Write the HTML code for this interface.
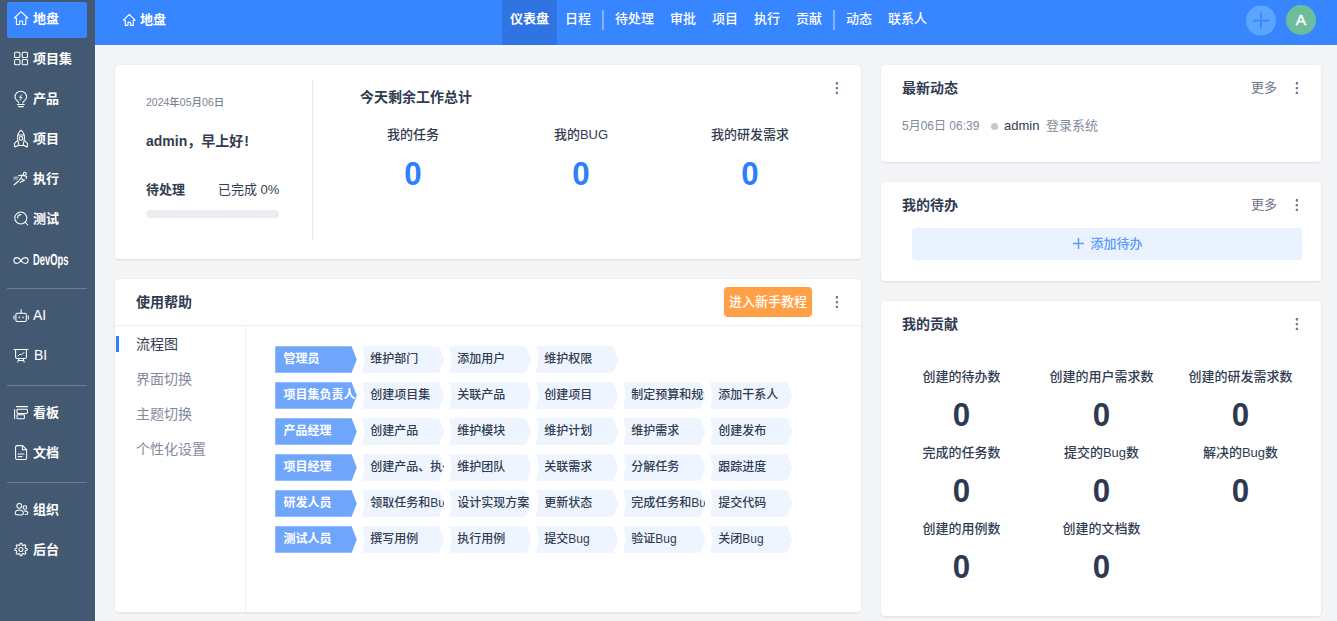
<!DOCTYPE html>
<html lang="zh-CN">
<head>
<meta charset="utf-8">
<title>地盘 - 禅道</title>
<style>
*{box-sizing:border-box;margin:0;padding:0}
html,body{width:1337px;height:621px;overflow:hidden;background:#f3f5f7;
  font-family:"Liberation Sans","Noto Sans CJK SC",sans-serif;font-size:13px;color:#313c52}
body{position:relative}
/* ---------- sidebar ---------- */
#menu{position:absolute;left:0;top:0;width:95px;height:621px;background:#435972}
#menu .act{position:absolute;left:7px;top:2px;width:80px;height:36px;border-radius:2px;background:#3785ff}
#ico{position:absolute;left:0;top:0;stroke:#fff;fill:none;stroke-width:1.05;stroke-linecap:round;stroke-linejoin:round}
#menu .it{position:absolute;left:33px;height:36px;color:#fff;font-size:13px;font-weight:bold;line-height:36px;white-space:nowrap}
#menu .it.lat{font-weight:normal;font-size:14px}
#menu .it.dev{font-size:16px}
#menu .it.dev span{display:inline-block;transform:scale(.585,1) rotate(.03deg);transform-origin:0 64%}
#menu .dv{position:absolute;left:7px;width:80px;height:1px;background:#6a7d94}
/* ---------- header ---------- */
#header{position:absolute;left:95px;top:0;width:1242px;height:45px;background:#3785ff;color:#fff}
#heading{position:absolute;left:27px;top:1px;height:38px;line-height:38px;font-size:13px;font-weight:bold;white-space:nowrap}
#heading svg{position:absolute;left:0;top:12px;width:15px;height:14px;stroke:#fff;fill:none;stroke-width:1.15;stroke-linejoin:round;stroke-linecap:round}
#heading span{margin-left:18px}
#nav{position:absolute;left:0;top:0;height:45px;white-space:nowrap}
#nav a{position:absolute;top:0;height:45px;line-height:38px;color:#fff;text-decoration:none;font-size:13px;font-weight:500}
#nav a.active{background:#2f74e0;font-weight:bold;padding:0 8px;width:55px}
#nav i{position:absolute;top:10px;width:2px;height:20px;background:rgba(255,255,255,.38);margin-left:-1px}
#plus{position:absolute;left:1151px;top:5px;transform:translateY(.6px);width:30px;height:30px;border-radius:50%;background:#5aa6ff}
#plus:before{content:"";position:absolute;left:7px;top:14px;width:16px;height:2px;background:#3c8aff}
#plus:after{content:"";position:absolute;left:14px;top:7px;width:2px;height:16px;background:#3c8aff}
#avatar{position:absolute;left:1191px;top:5px;width:30px;height:30px;border-radius:50%;background:#6dbd9c;color:#fff;
  font-size:15.5px;line-height:30px;text-align:center;-webkit-text-stroke:.4px #fff}
/* ---------- cards ---------- */
.card{position:absolute;background:#fff;border-radius:4px;box-shadow:0 0 5px rgba(30,40,60,.04),0 1px 2px rgba(30,40,60,.08)}
.card h3{position:absolute;left:21px;top:13px;font-size:14px;font-weight:bold;color:#313c52;line-height:20px;white-space:nowrap}
.dots{position:absolute;width:4px;height:14px;margin-left:-1px;background:
  radial-gradient(circle at 1.9px 1.3px,#6e7c99 1.05px,rgba(110,124,153,0) 1.65px),
  radial-gradient(circle at 1.9px 6.1px,#6e7c99 1.05px,rgba(110,124,153,0) 1.65px),
  radial-gradient(circle at 1.9px 10.9px,#6e7c99 1.05px,rgba(110,124,153,0) 1.65px)}
.more{position:absolute;font-size:13px;color:#6f7688;line-height:20px}

/* card 1 */
#c1 .date{position:absolute;left:31px;top:30px;font-size:10.5px;font-weight:500;color:#7b8293;line-height:14px;white-space:nowrap}
#c1 .hello{position:absolute;left:31px;top:66px;font-size:14px;font-weight:bold;color:#313c52;line-height:20px;white-space:nowrap}
#c1 .wait{position:absolute;left:31px;top:115px;font-size:13px;font-weight:bold;line-height:20px;white-space:nowrap}
#c1 .done{position:absolute;left:103px;top:115px;font-size:13px;line-height:20px;white-space:nowrap;color:#313c52}
#c1 .bar{position:absolute;left:31px;top:145px;width:133px;height:8px;border-radius:4px;background:#ebedf0}
#c1 .vline{position:absolute;left:197px;top:16px;width:1px;height:158px;background:#e6e8ec}
#c1 .sum{position:absolute;left:245px;top:22px;font-size:14px;font-weight:bold;line-height:20px;white-space:nowrap}
#c1 .col{position:absolute;top:60px;width:168px;text-align:center}
#c1 .col b{display:block;font-weight:500;font-size:13px;line-height:20px;color:#313c52}
#c1 .col em{display:block;font-style:normal;font-weight:bold;font-size:34px;line-height:34px;color:#2e7fff;margin-top:11px;transform:scaleX(.92)}
/* card 2 */
#c2 .hd{position:absolute;left:0;top:0;width:746px;height:47px;border-bottom:1px solid #edeff3}
#c2 .btn{position:absolute;left:609px;top:8px;width:88px;height:30px;border-radius:4px;background:#ff9f46;color:#fff;font-size:13px;font-weight:500;
  line-height:29px;text-align:center}
#c2 .side{position:absolute;left:0;top:47px;width:131px;height:286px;border-right:1px solid #edeff3}
#c2 .side a{position:absolute;left:21px;font-size:14px;line-height:20px;color:#838a9d;white-space:nowrap}
#c2 .side a.on{color:#313c52}
#c2 .side i{position:absolute;left:1px;top:10px;width:3px;height:16px;background:#2e7fff}
.flow{position:absolute;left:160px;height:27px;white-space:nowrap}
.flow div{position:absolute;top:0;height:27px;width:82.3px;font-size:12px;font-weight:500;line-height:26.4px;color:#313c52;overflow:hidden;
  background:#eef5ff;padding-left:8.3px;white-space:nowrap;
  clip-path:polygon(0 .2px,77.3px .2px,82.3px 13.45px,77.3px 26.7px,0 26.7px,3px 13.45px)}
.flow div.h{left:0;width:82px;background:#6fa6fc;color:#fff;font-weight:bold;padding-left:8.6px;
  clip-path:polygon(.2px .2px,76.6px .2px,81.8px 13.45px,76.6px 26.7px,.2px 26.7px)}
/* card 3 */
#c3 .row{position:absolute;left:21px;top:51px;line-height:20px;white-space:nowrap;font-size:13px}
#c3 .row .t{position:absolute;left:0;top:0;font-size:12px;color:#838a9d}
#c3 .row .d{position:absolute;left:89px;top:7px;width:7px;height:7px;border-radius:50%;background:#c5c7cc}
#c3 .row .u{position:absolute;left:102px;top:0;color:#313c52}
#c3 .row .a{position:absolute;left:144px;top:0;color:#838a9d}
/* card 4 */
#c4 .add{position:absolute;left:31px;top:46px;width:390px;height:32px;border-radius:4px;background:#e9f2fe;color:#5b9bfb;
  font-size:13px;font-weight:500;line-height:32px;text-align:center;padding-left:2px}
#c4 .add svg{width:11px;height:11px;vertical-align:-1px;margin-right:6px;stroke:#5b9bfb;stroke-width:1.5;fill:none}
/* card 5 */
#c5 .g{position:absolute;width:139px;text-align:center}
#c5 .g b{display:block;font-weight:500;font-size:13px;line-height:20px;color:#313c52;white-space:nowrap}
#c5 .g em{display:block;font-style:normal;font-weight:bold;font-size:34px;line-height:36px;color:#2d3950;margin-top:9px;margin-bottom:1px;transform:scaleX(.92)}
</style>
</head>
<body>

<!-- ================= SIDEBAR ================= -->
<div id="menu">
  <div class="act"></div>
<svg id="ico" width="95" height="621" viewBox="0 0 95 621">
  <path d="M21 11.6 L14.4 18 H16.4 V24.4 H19.6 V21 H22.6 V24.4 H25.8 V18 H27.8 Z"/>
  <rect x="14.6" y="52.3" width="5.3" height="5.2" rx="1"/><rect x="22.2" y="52.3" width="5.3" height="5.2" rx="1"/><rect x="14.6" y="59.5" width="5.3" height="5.2" rx="1"/><rect x="22.2" y="59.5" width="5.3" height="5.2" rx="1"/>
  <path d="M18.7 103 C18.7 101.2 15 100.2 15 97 A5.8 5.8 0 0 1 26.6 97 C26.6 100.2 22.9 101.2 22.9 103 M17.5 104.5 H24.3 M18.5 106.6 H23.4"/><path d="M21.6 94.8 L19.6 97.4 H22 L20 100" stroke-width=".9"/>
  <path d="M21 130.2 C17.6 133 17 137 18 141 L19 145.4 H23 L24 141 C25 137 24.4 133 21 130.2 Z M18.4 135 H23.6 M17.8 140 L14.4 143.6 L14.8 147 L18.6 145.2 M24.2 140 L27.6 143.6 L27.2 147 L23.4 145.2"/><circle cx="21" cy="138.4" r="1.8"/>
  <circle cx="24.8" cy="173.8" r="1.5"/><path d="M18.5 175.8 L22.5 175 L20.5 178.5 L24.5 180.2 L20 182.5 M21 178 L18.5 181 L14 185 M23 175.5 L26.8 176.5 L26 178.5"/><path d="M14 177.2 H18 M13.8 179 H17.5" opacity=".7"/>
  <circle cx="20.8" cy="218" r="6"/><path d="M25.2 222.4 L27.8 225 M17.6 218 A3.4 3.4 0 0 1 21 214.6"/>
  <path d="M21 260.5 C19.5 258.2 18.2 257.6 16.8 257.6 A2.9 2.9 0 0 0 16.8 263.4 C18.2 263.4 19.5 262.8 21 260.5 C22.5 258.2 23.8 257.6 25.2 257.6 A2.9 2.9 0 0 1 25.2 263.4 C23.8 263.4 22.5 262.8 21 260.5 Z"/>
  <rect x="15.9" y="313.3" width="10.4" height="8.2" rx="1.2"/><path d="M21.1 309.6 V313 M14 315.8 V319 M28.3 315.8 V319"/><circle cx="19.3" cy="317.4" r=".8" fill="#fff" stroke="none"/><circle cx="22.9" cy="317.4" r=".8" fill="#fff" stroke="none"/>
  <path d="M14 349.4 H28 M15.6 349.4 V357 A1.4 1.4 0 0 0 17 358.4 H25 A1.4 1.4 0 0 0 26.4 357 V349.4 M19 358.6 L17.8 362 M23 358.6 L24.2 362 M18.4 360.4 H23.6"/><path d="M18 356 L20 354 L21.4 355 L24 352.4" stroke-width="1"/>
  <path d="M16.4 406.6 H27.6 M14.6 409.6 V418.6"/><rect x="17" y="409.2" width="10.4" height="4.2" rx=".8"/><rect x="17" y="414.8" width="7.4" height="4" rx=".8"/>
  <path d="M15.6 447 A1.4 1.4 0 0 1 17 445.6 H22.6 L26.6 449.6 V458 A1.4 1.4 0 0 1 25.2 459.4 H17 A1.4 1.4 0 0 1 15.6 458 Z M22.4 445.8 V449.8 H26.4 M18.2 454 H24 M18.2 456.6 H22"/>
  <circle cx="19.3" cy="505.8" r="2.4"/><path d="M15.2 513.4 C15.2 511.2 17 510 19.3 510 C21.6 510 23.4 511.2 23.4 513.4 C23.4 514.4 22.4 514.9 19.3 514.9 C16.2 514.9 15.2 514.4 15.2 513.4 Z"/><circle cx="24.9" cy="507.5" r="1.8"/><path d="M24.4 510.9 C26.4 510.7 27.9 511.8 27.9 513.2 C27.9 514 27 514.4 25.2 514.4"/>
  <path d="M25.16 551.22 L25.04 551.49 L25.01 551.81 L25.45 552.47 L25.82 553.20 L25.66 553.59 L25.38 553.88 L25.09 554.16 L24.70 554.32 L23.97 553.95 L23.31 553.51 L22.99 553.54 L22.72 553.66 L22.45 553.76 L22.20 553.97 L22.04 554.75 L21.79 555.52 L21.41 555.69 L21.00 555.70 L20.59 555.69 L20.21 555.52 L19.96 554.75 L19.80 553.97 L19.55 553.76 L19.28 553.66 L19.01 553.54 L18.69 553.51 L18.03 553.95 L17.30 554.32 L16.91 554.16 L16.62 553.88 L16.34 553.59 L16.18 553.20 L16.55 552.47 L16.99 551.81 L16.96 551.49 L16.84 551.22 L16.74 550.95 L16.53 550.70 L15.75 550.54 L14.98 550.29 L14.81 549.91 L14.80 549.50 L14.81 549.09 L14.98 548.71 L15.75 548.46 L16.53 548.30 L16.74 548.05 L16.84 547.78 L16.96 547.51 L16.99 547.19 L16.55 546.53 L16.18 545.80 L16.34 545.41 L16.62 545.12 L16.91 544.84 L17.30 544.68 L18.03 545.05 L18.69 545.49 L19.01 545.46 L19.28 545.34 L19.55 545.24 L19.80 545.03 L19.96 544.25 L20.21 543.48 L20.59 543.31 L21.00 543.30 L21.41 543.31 L21.79 543.48 L22.04 544.25 L22.20 545.03 L22.45 545.24 L22.72 545.34 L22.99 545.46 L23.31 545.49 L23.97 545.05 L24.70 544.68 L25.09 544.84 L25.38 545.12 L25.66 545.41 L25.82 545.80 L25.45 546.53 L25.01 547.19 L25.04 547.51 L25.16 547.78 L25.26 548.05 L25.47 548.30 L26.25 548.46 L27.02 548.71 L27.19 549.09 L27.20 549.50 L27.19 549.91 L27.02 550.29 L26.25 550.54 L25.47 550.70 L25.26 550.95 Z"/><circle cx="21" cy="549.5" r="2"/>
</svg>
  <div class="it " style="top:1px"><span>地盘</span></div>
  <div class="it " style="top:41px"><span>项目集</span></div>
  <div class="it " style="top:81px"><span>产品</span></div>
  <div class="it " style="top:121px"><span>项目</span></div>
  <div class="it " style="top:161px"><span>执行</span></div>
  <div class="it " style="top:201px"><span>测试</span></div>
  <div class="it dev" style="top:242px"><span>DevOps</span></div>
  <div class="it lat" style="top:297px"><span>AI</span></div>
  <div class="it lat" style="top:337px;left:34px"><span>BI</span></div>
  <div class="it " style="top:395px"><span>看板</span></div>
  <div class="it " style="top:435px"><span>文档</span></div>
  <div class="it " style="top:492px"><span>组织</span></div>
  <div class="it " style="top:532px"><span>后台</span></div>
  <div class="dv" style="top:288px"></div>
  <div class="dv" style="top:385px"></div>
  <div class="dv" style="top:482px"></div>
</div>

<!-- ================= HEADER ================= -->
<div id="header">
  <div id="heading"><svg viewBox="0 0 15 14"><path d="M7.3 1.4 L1.5 7.2 H3.3 V12.4 H6 V9.3 H8.6 V12.4 H11.3 V7.2 H13.1 Z"/></svg><span>地盘</span></div>
  <div id="nav">
    <a class="active" style="left:407px">仪表盘</a>
    <a style="left:470px">日程</a>
    <i style="left:508px"></i>
    <a style="left:520px">待处理</a>
    <a style="left:575px">审批</a>
    <a style="left:617px">项目</a>
    <a style="left:659px">执行</a>
    <a style="left:701px">贡献</a>
    <i style="left:739px"></i>
    <a style="left:751px">动态</a>
    <a style="left:793px">联系人</a>
  </div>
  <div id="plus"></div>
  <div id="avatar">A</div>
</div>

<!-- ================= CARD 1: welcome ================= -->
<div class="card" id="c1" style="left:115px;top:65px;width:746px;height:194px">
  <div class="date">2024年05月06日</div>
  <div class="hello">admin，早上好<span style="margin-left:1px">!</span></div>
  <div class="wait">待处理</div>
  <div class="done">已完成 0%</div>
  <div class="bar"></div>
  <div class="vline"></div>
  <div class="sum">今天剩余工作总计</div>
  <div class="col" style="left:214px"><b>我的任务</b><em>0</em></div>
  <div class="col" style="left:382px"><b>我的BUG</b><em>0</em></div>
  <div class="col" style="left:551px"><b>我的研发需求</b><em>0</em></div>
  <div class="dots" style="left:721px;top:17px"></div>
</div>

<!-- ================= CARD 2: help ================= -->
<div class="card" id="c2" style="left:115px;top:279px;width:746px;height:333px">
  <div class="hd"></div>
  <h3>使用帮助</h3>
  <div class="btn">进入新手教程</div>
  <div class="dots" style="left:721px;top:17px"></div>
  <div class="side">
    <i></i>
    <a class="on" style="top:8px">流程图</a>
    <a style="top:43px">界面切换</a>
    <a style="top:78px">主题切换</a>
    <a style="top:113px">个性化设置</a>
  </div>
  <div class="flow" style="top:67px"><div class="h">管理员</div><div style="left:87px">维护部门</div><div style="left:174px">添加用户</div><div style="left:261px">维护权限</div></div>
  <div class="flow" style="top:103px"><div class="h">项目集负责人</div><div style="left:87px">创建项目集</div><div style="left:174px">关联产品</div><div style="left:261px">创建项目</div><div style="left:348px">制定预算和规划</div><div style="left:435px">添加干系人</div></div>
  <div class="flow" style="top:139px"><div class="h">产品经理</div><div style="left:87px">创建产品</div><div style="left:174px">维护模块</div><div style="left:261px">维护计划</div><div style="left:348px">维护需求</div><div style="left:435px">创建发布</div></div>
  <div class="flow" style="top:175px"><div class="h">项目经理</div><div style="left:87px">创建产品、执行</div><div style="left:174px">维护团队</div><div style="left:261px">关联需求</div><div style="left:348px">分解任务</div><div style="left:435px">跟踪进度</div></div>
  <div class="flow" style="top:211px"><div class="h">研发人员</div><div style="left:87px">领取任务和Bug</div><div style="left:174px">设计实现方案</div><div style="left:261px">更新状态</div><div style="left:348px">完成任务和Bug</div><div style="left:435px">提交代码</div></div>
  <div class="flow" style="top:247px"><div class="h">测试人员</div><div style="left:87px">撰写用例</div><div style="left:174px">执行用例</div><div style="left:261px">提交Bug</div><div style="left:348px">验证Bug</div><div style="left:435px">关闭Bug</div></div>
</div>

<!-- ================= CARD 3: dynamic ================= -->
<div class="card" id="c3" style="left:881px;top:65px;width:440px;height:97px">
  <h3>最新动态</h3>
  <div class="more" style="left:370px;top:13px">更多</div>
  <div class="dots" style="left:415px;top:17px"></div>
  <div class="row"><span class="t">5月06日 06:39</span><span class="d"></span><span class="u">admin</span><span class="a">登录系统</span></div>
</div>

<!-- ================= CARD 4: todo ================= -->
<div class="card" id="c4" style="left:881px;top:182px;width:440px;height:99px">
  <h3>我的待办</h3>
  <div class="more" style="left:370px;top:13px">更多</div>
  <div class="dots" style="left:415px;top:17px"></div>
  <div class="add"><svg viewBox="0 0 11 11"><path d="M5.5 0V11M0 5.5H11"/></svg>添加待办</div>
</div>

<!-- ================= CARD 5: contribution ================= -->
<div class="card" id="c5" style="left:881px;top:301px;width:440px;height:315px">
  <h3>我的贡献</h3>
  <div class="dots" style="left:415px;top:17px"></div>
  <div class="g" style="left:11px;top:66px"><b>创建的待办数</b><em>0</em></div>
  <div class="g" style="left:151px;top:66px"><b>创建的用户需求数</b><em>0</em></div>
  <div class="g" style="left:290px;top:66px"><b>创建的研发需求数</b><em>0</em></div>
  <div class="g" style="left:11px;top:142px"><b>完成的任务数</b><em>0</em></div>
  <div class="g" style="left:151px;top:142px"><b>提交的Bug数</b><em>0</em></div>
  <div class="g" style="left:290px;top:142px"><b>解决的Bug数</b><em>0</em></div>
  <div class="g" style="left:11px;top:218px"><b>创建的用例数</b><em>0</em></div>
  <div class="g" style="left:151px;top:218px"><b>创建的文档数</b><em>0</em></div>
</div>

</body>
</html>
